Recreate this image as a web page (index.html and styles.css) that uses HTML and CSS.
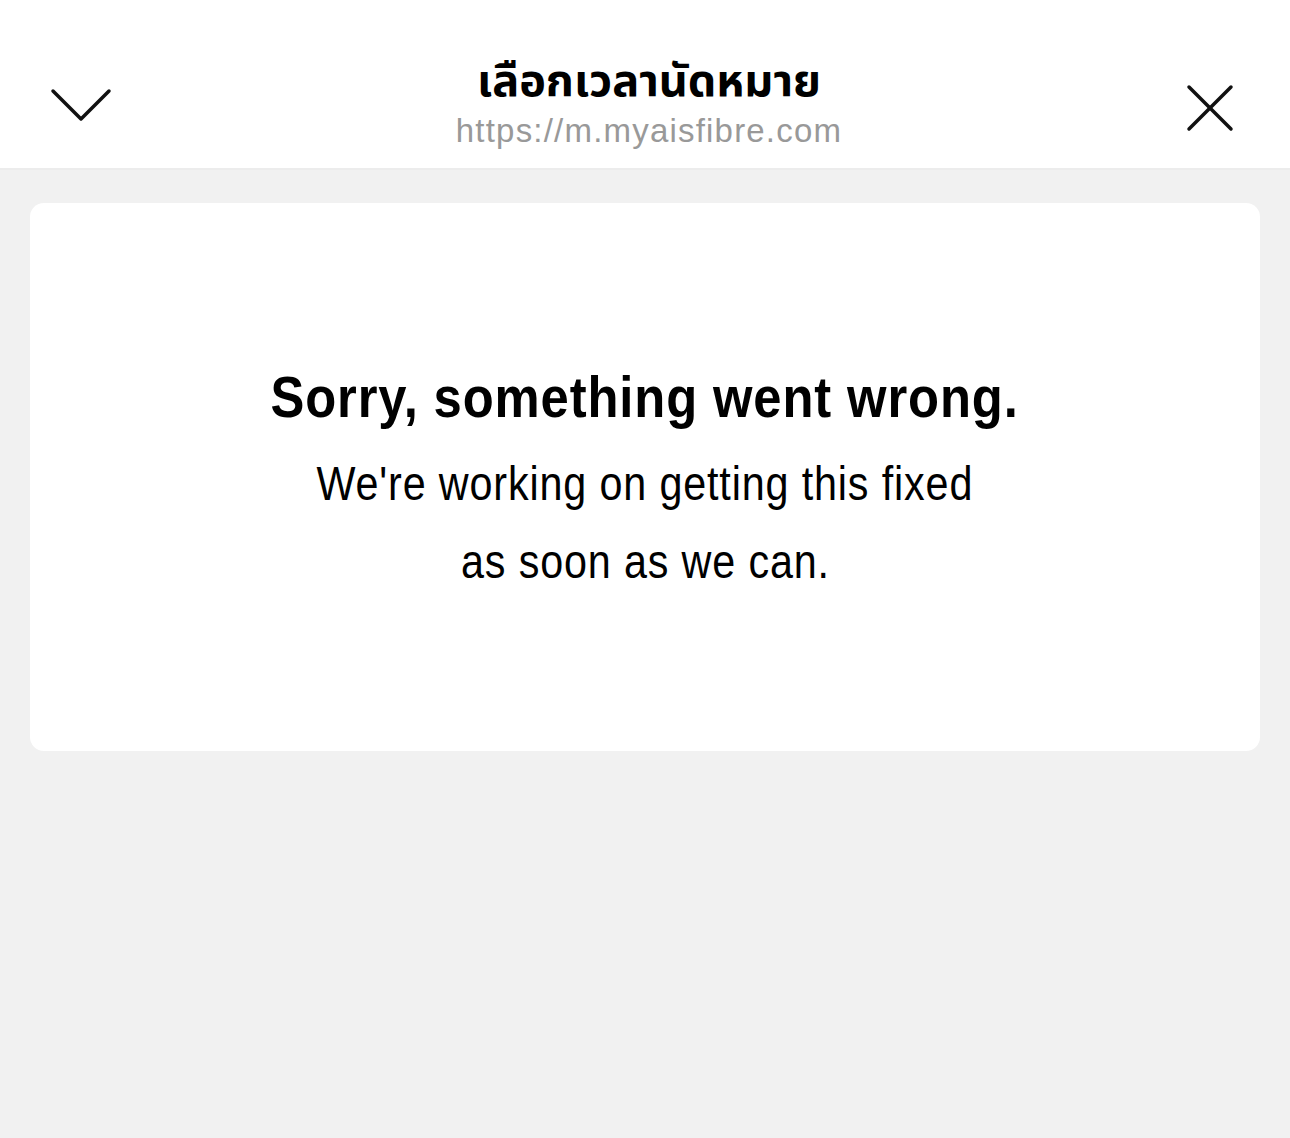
FILE: index.html
```html
<!DOCTYPE html>
<html lang="th">
<head>
    <meta charset="UTF-8">
    <meta name="viewport" content="width=device-width, initial-scale=1.0">
    <title>เลือกเวลานัดหมาย</title>
    <link rel="stylesheet" href="styles.css">
</head>
<body>
    <header class="topbar">
        <button class="icon-btn chevron" aria-label="Minimize">
            <svg width="62" height="40" viewBox="0 0 62 40">
                <polyline points="3,5 31,33 59,5" fill="none" stroke="#111" stroke-width="3.5" stroke-linecap="round" stroke-linejoin="round"/>
            </svg>
        </button>
        <div class="title-block">
            <div class="title">เลือกเวลานัดหมาย</div>
            <div class="url">https://m.myaisfibre.com</div>
        </div>
        <button class="icon-btn close" aria-label="Close">
            <svg width="48" height="48" viewBox="0 0 48 48">
                <line x1="3" y1="3" x2="45" y2="45" stroke="#111" stroke-width="3.5" stroke-linecap="round"/>
                <line x1="45" y1="3" x2="3" y2="45" stroke="#111" stroke-width="3.5" stroke-linecap="round"/>
            </svg>
        </button>
    </header>

    <main class="content">
        <section class="card">
            <h1><span class="narrow">Sorry, something went wrong.</span></h1>
            <p><span class="narrow">We're working on getting this fixed</span></p>
            <p><span class="narrow">as soon as we can.</span></p>
        </section>
    </main>
</body>
</html>
```

FILE: styles.css
```css
body {
    margin: 0;
    padding: 0;
    background-color: #f1f1f1;
    font-family: "Liberation Sans", Arial, sans-serif;
    color: #000;
    height: 1138px;
}

.topbar {
    height: 170px;
    background: #fff;
    border-bottom: 2px solid #ececec;
    box-sizing: border-box;
    display: flex;
    align-items: center;
    justify-content: space-between;
    padding: 34px 56px 0 50px;
}

.icon-btn {
    background: none;
    border: none;
    padding: 0;
    display: flex;
}

.chevron {
    margin-top: 10px;
}

.close {
    margin-top: 14px;
}

.title-block {
    text-align: center;
    margin-top: 10px;
}

.title {
    font-family: "Noto Sans Thai", "Noto Sans", sans-serif;
    font-weight: bold;
    font-size: 45px;
    line-height: 50px;
}

.url {
    font-size: 33px;
    color: #999;
    line-height: 48px;
    letter-spacing: 1.2px;
}

.content {
    padding: 33px 30px;
}

.card {
    background: #fff;
    border-radius: 14px;
    height: 548px;
    box-sizing: border-box;
    padding-top: 154px;
    text-align: center;
}

.narrow {
    display: inline-block;
    white-space: nowrap;
}

h1 {
    margin: 0 0 8px;
    font-size: 58px;
    font-weight: bold;
    line-height: 80px;
    letter-spacing: 1px;
}

h1 .narrow {
    transform: scaleX(0.875);
}

p {
    margin: 0;
    font-size: 48px;
    line-height: 78px;
    letter-spacing: 1px;
}

p .narrow {
    transform: scaleX(0.86);
}
```
